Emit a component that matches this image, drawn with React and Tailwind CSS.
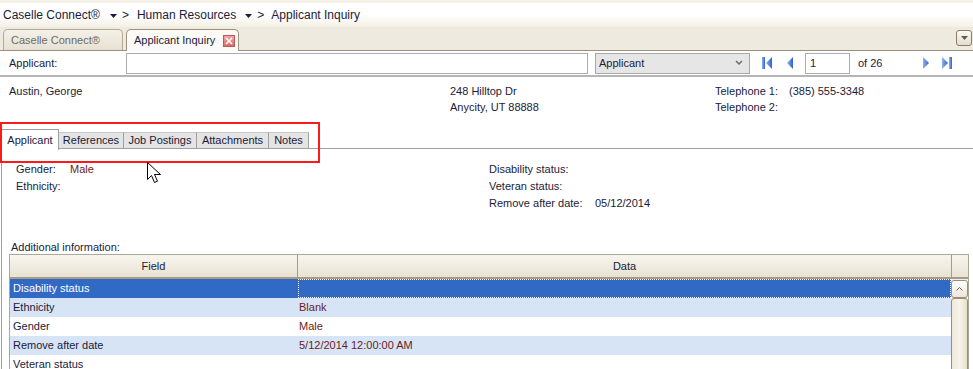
import React from "react";

const Caret = () => (
  <svg width="7" height="4" viewBox="0 0 7 4" className="mt-[2px]">
    <path d="M0 0h7L3.5 4z" fill="#1b1b3a" />
  </svg>
);

const NavIcon = ({ dir, bar }) => {
  // little blue media-style arrows of the pager
  const left = dir === "left";
  return (
    <svg width="12" height="14" viewBox="0 0 12 14">
      <defs>
        <linearGradient id={`g-${dir}-${bar ? 1 : 0}`} x1="0" y1="0" x2="1" y2="0">
          <stop offset="0" stopColor="#8fb4f0" />
          <stop offset="1" stopColor="#2f62c8" />
        </linearGradient>
      </defs>
      {left ? (
        <>
          {bar && <rect x="1" y="1" width="3" height="12" fill={`url(#g-${dir}-1)`} />}
          <path d={bar ? "M11 1v12L5 7z" : "M8 1v12L2 7z"} fill={`url(#g-${dir}-${bar ? 1 : 0})`} />
        </>
      ) : (
        <>
          <path d={bar ? "M1 1v12l6-6z" : "M4 1v12l6-6z"} fill={`url(#g-${dir}-${bar ? 1 : 0})`} />
          {bar && <rect x="8" y="1" width="3" height="12" fill={`url(#g-${dir}-1)`} />}
        </>
      )}
    </svg>
  );
};

const rows = [
  { field: "Disability status", data: "", selected: true },
  { field: "Ethnicity", data: "Blank" },
  { field: "Gender", data: "Male" },
  { field: "Remove after date", data: "5/12/2014 12:00:00 AM" },
  { field: "Veteran status", data: "" },
];

const innerTabs = [
  { label: "Applicant", w: "w-[58px]", active: true },
  { label: "References", w: "w-[65px]" },
  { label: "Job Postings", w: "w-[73px]" },
  { label: "Attachments", w: "w-[72px]" },
  { label: "Notes", w: "w-[40px]" },
];

export default function App() {
  return (
    <div className="relative w-[973px] h-[369px] overflow-hidden bg-white text-[11px] leading-none text-[#1b1b3a] font-[Tahoma,'Liberation_Sans',sans-serif]">
      {/* breadcrumb */}
      <div className="h-[27px] border-t-[3px] border-[#f5f1e7] bg-gradient-to-b from-white via-white to-[#f4f0e5] flex items-center pl-[3px] text-[12px]">
        <span>Caselle Connect®</span>
        <span className="ml-[10px]"><Caret /></span>
        <span className="ml-[5px]">&gt;</span>
        <span className="ml-[8px]">Human Resources</span>
        <span className="ml-[9px]"><Caret /></span>
        <span className="ml-[5px]">&gt;</span>
        <span className="ml-[7px]">Applicant Inquiry</span>
      </div>

      {/* document tabs */}
      <div className="h-[24px] bg-[#eeeadf] border-b border-[#9d907c] flex items-end pl-[3px] gap-[3px]">
        <div className="w-[120px] h-[21px] rounded-t-[5px] border border-b-0 border-[#b3a995] bg-gradient-to-b from-[#f4f1e9] to-[#e6e1d3] flex items-center pl-[7px] text-[#6f6a62]">
          Caselle Connect®
        </div>
        <div className="w-[113px] h-[22px] -mb-px rounded-t-[5px] border border-b-0 border-[#9d907c] bg-[#fbfaf6] flex items-center pl-[7px]">
          <span>Applicant Inquiry</span>
          <span className="ml-auto mr-[3px] w-[12px] h-[12px] border border-[#b85a5a] bg-gradient-to-b from-[#f4a4a4] to-[#dc6a6a] flex items-center justify-center">
            <svg width="8" height="8" viewBox="0 0 8 8">
              <path d="M1 1l6 6M7 1L1 7" stroke="#fff" strokeWidth="1.6" />
            </svg>
          </span>
        </div>
        <div className="ml-auto mr-[1px] mb-[4px] w-[16px] h-[16px] rounded-[3px] border border-[#8c7b66] bg-gradient-to-b from-[#fbfaf6] to-[#e4ddcd] flex items-center justify-center">
          <svg width="7" height="4" viewBox="0 0 7 4">
            <path d="M0 0h7L3.5 4z" fill="#6a5a4a" />
          </svg>
        </div>
      </div>

      {/* toolbar */}
      <div className="h-[26px] border-b-2 border-[#b5b5b5] flex items-center">
        <span className="w-[126px] pl-[9px]">Applicant:</span>
        <div className="w-[462px] h-[21px] border border-[#a9adb3] bg-white" />
        <div className="ml-[7px] w-[155px] h-[21px] border border-[#a8a8a8] bg-[#e6e6e6] flex items-center pl-[3px]">
          <span>Applicant</span>
          <svg width="8" height="6" viewBox="0 0 8 6" className="ml-auto mr-[6px]">
            <path d="M1 1l3 3 3-3" stroke="#6a6a6a" strokeWidth="1.5" fill="none" />
          </svg>
        </div>
        <span className="ml-[11px]"><NavIcon dir="left" bar /></span>
        <span className="ml-[12px]"><NavIcon dir="left" /></span>
        <div className="ml-[8px] w-[45px] h-[21px] border border-[#a9adb3] flex items-center pl-[4px]">1</div>
        <span className="ml-[8px]">of 26</span>
        <span className="ml-[37px]"><NavIcon dir="right" /></span>
        <span className="ml-[10px]"><NavIcon dir="right" bar /></span>
      </div>

      {/* applicant info */}
      <div className="h-[43px] pt-[6px] flex leading-[16px]">
        <div className="w-[450px] pl-[9px]">Austin, George</div>
        <div className="w-[265px]">
          <div>248 Hilltop Dr</div>
          <div>Anycity, UT 88888</div>
        </div>
        <div>
          <div className="flex"><span className="w-[74px]">Telephone 1:</span><span>(385) 555-3348</span></div>
          <div>Telephone 2:</div>
        </div>
      </div>

      {/* inner tabs */}
      <div className="mt-[8px] flex items-end h-[21px]">
        {innerTabs.map((t) =>
          t.active ? (
            <div key={t.label} className={`${t.w} ml-[1px] h-[21px] -mb-px border border-b-0 border-[#a0a0a0] bg-white flex items-start pt-[5px] justify-center`}>
              {t.label}
            </div>
          ) : (
            <div key={t.label} className={`${t.w} h-[17px] border border-l-0 border-[#a0a0a0] border-t-[#c8c8c8] bg-[#e4e4e4] flex items-center justify-center`}>
              {t.label}
            </div>
          )
        )}
        <div className="flex-1 border-b border-[#a0a0a0]" />
      </div>

      {/* panel */}
      <div className="ml-[1px] border-l border-[#a0a0a0] h-[220px] pt-[12px]">
        <div className="flex leading-[17px]">
          <div className="w-[487px] pl-[14px]">
            <div className="flex"><span className="w-[54px]">Gender:</span><span className="text-[#6b1c1c]">Male</span></div>
            <div>Ethnicity:</div>
          </div>
          <div>
            <div>Disability status:</div>
            <div>Veteran status:</div>
            <div className="flex"><span className="w-[106px]">Remove after date:</span><span>05/12/2014</span></div>
          </div>
        </div>

        <div className="mt-[30px] pl-[9px]">Additional information:</div>

        {/* grid */}
        <div className="mt-[1px] ml-[7px] w-[960px] border border-[#aca899] flex">
          <div className="flex-1">
            <div className="h-[24px] flex bg-gradient-to-b from-[#f7f5ee] to-[#e8e3d3] border-b-2 border-[#a79a86] rounded-tl-[4px]">
              <div className="w-[288px] border-r border-[#a79a86] flex items-center justify-center">Field</div>
              <div className="flex-1 flex items-center justify-center">Data</div>
            </div>
            {rows.map((r, i) => (
              <div
                key={r.field}
                className={`h-[19px] flex ${r.selected ? "bg-[#316ac5] text-white" : i % 2 === 1 ? "bg-[#d7e4f6]" : "bg-white"}`}
              >
                <div className="w-[288px] pl-[3px] flex items-center">{r.field}</div>
                <div className={`flex-1 pl-[1px] flex items-center text-[#6b1c1c] ${r.selected ? "border border-dotted border-white" : ""}`}>
                  {r.data}
                </div>
              </div>
            ))}
          </div>
          {/* scrollbar */}
          <div className="w-[17px] flex flex-col bg-[#f3f1ea]">
            <div className="h-[24px] border-b-2 border-l border-[#a79a86] rounded-tr-[4px] bg-gradient-to-b from-[#f7f5ee] to-[#e8e3d3]" />
            <div className="h-[18px] mt-[1px] border border-[#a08c74] rounded-[3px] bg-gradient-to-b from-white to-[#ece7db] flex items-center justify-center">
              <svg width="7" height="4" viewBox="0 0 7 4">
                <path d="M0.5 3.5L3.5 0.5 6.5 3.5" stroke="#6a5a4a" fill="none" />
              </svg>
            </div>
            <div className="flex-1 border border-[#a08c74] rounded-[3px] bg-gradient-to-r from-[#ede8da] via-[#f7f4ec] to-[#e6dfcc]" />
          </div>
        </div>
      </div>

      {/* annotation box */}
      <div className="absolute left-0 top-[122px] w-[320px] h-[41px] border-2 border-[#ff1a1a]" />

      {/* mouse pointer */}
      <svg className="absolute left-[147px] top-[162px]" width="17" height="24" viewBox="0 0 17 24">
        <path d="M0.5 0.5v17l4-4 3 7 3-1.3-3-6.7h6z" fill="#fff" stroke="#000" strokeWidth="1" />
      </svg>
    </div>
  );
}
